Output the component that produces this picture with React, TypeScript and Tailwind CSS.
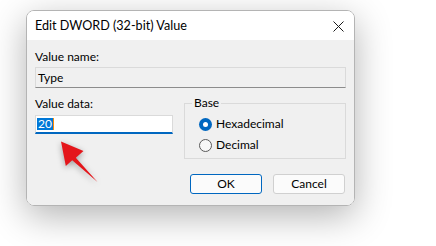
export default function App() {
  return (
    <div className="relative h-[246px] w-[436px] overflow-hidden bg-white font-['Lato','Noto_Sans',sans-serif] text-[12px] leading-[16px] text-black">
      <div className="ml-[26px] mt-[10px] flex h-[196px] w-[329px] flex-col overflow-hidden rounded-[8px] border border-[#b4b4b4] shadow-[0_10px_36px_rgba(0,0,0,0.3)]">
        {/* title bar */}
        <div className="flex h-[29px] items-center justify-between bg-white pl-[8px] pr-[10px]">
          <span className="pt-[1px] text-[12.6px]">Edit DWORD (32-bit) Value</span>
          <svg width="11" height="11" viewBox="0 0 11 11" className="mt-[1px]">
            <path d="M0.5 0.5 L10.5 10.5 M10.5 0.5 L0.5 10.5" stroke="#1a1a1a" strokeWidth="1" />
          </svg>
        </div>

        {/* body */}
        <div className="flex flex-1 flex-col bg-[#f0f0f0] px-[8px]">
          <div className="mt-[9px]">Value name:</div>
          <div className="mt-[2px] h-[21px] border border-[#dadada] border-b-[#8c8c8c] bg-[#f0f0f0] pl-[2px] leading-[19px]">
            Type
          </div>

          <div className="mt-[8px] flex">
            <div className="w-[138px]">
              <div>Value data:</div>
              <div className="mt-[3px] flex h-[19px] items-center border border-[#dadada] border-b-2 border-b-[#0067c0] bg-white pl-[1px]">
                <span className="bg-[#0078d7] px-[1px] leading-[12px] text-white">20</span>
                <span className="h-[12px] w-[1px] bg-[#ff8c00]" />
              </div>
            </div>

            <fieldset className="-mt-[1px] ml-[11px] h-[64px] w-[162px] border border-[#dadada] px-[14px]">
              <legend className="ml-[-7px] px-[2px]">Base</legend>
              <label className="mt-[5px] flex items-center gap-[4px]">
                <span className="flex h-[13px] w-[13px] items-center justify-center rounded-full bg-[#0067c0]">
                  <span className="h-[5px] w-[5px] rounded-full bg-white" />
                </span>
                <span>Hexadecimal</span>
              </label>
              <label className="mt-[5px] flex items-center gap-[4px]">
                <span className="h-[13px] w-[13px] rounded-full border border-[#5a5a5a] bg-[#f7f7f7]" />
                <span>Decimal</span>
              </label>
            </fieldset>
          </div>

          <div className="mt-[15px] flex justify-end gap-[11px] pr-[1px]">
            <button className="h-[20px] w-[72px] rounded-[3px] border border-[#0067c0] bg-[#fbfbfb] leading-[18px]">OK</button>
            <button className="h-[20px] w-[72px] rounded-[3px] border border-[#d0d0d0] bg-[#fbfbfb] leading-[18px]">Cancel</button>
          </div>
        </div>
      </div>

      {/* red arrow */}
      <svg
        className="absolute left-0 top-0 drop-shadow-[0_2px_3px_rgba(0,0,0,0.35)]"
        width="436"
        height="246"
        viewBox="0 0 436 246"
      >
        <polygon
          points="61,141.5 83.5,151 75.8,157.8 97.5,182 72.2,160.2 65.8,166"
          fill="#e4161b"
        />
      </svg>
    </div>
  );
}
